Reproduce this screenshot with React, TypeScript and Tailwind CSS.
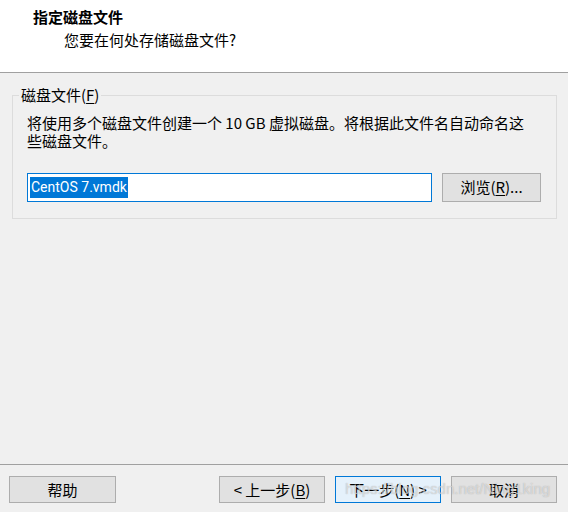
import React from 'react';

const font = { fontFamily: '"Noto Sans CJK SC", "Noto Sans", sans-serif' };

function WinButton({ children, focused = false, className = '' }: { children: React.ReactNode; focused?: boolean; className?: string }) {
  return (
    <button
      className={`h-[27px] w-[106px] border text-[15px] leading-none text-[#000] ${
        focused ? 'border-[#0078d7] bg-[#e5f1fb]' : 'border-[#adadad] bg-[#e1e1e1]'
      } ${className}`}
    >
      {children}
    </button>
  );
}

export default function App() {
  return (
    <div className="relative flex h-[512px] w-[568px] flex-col bg-[#f0f0f0] text-black" style={font}>
      {/* Header */}
      <div className="h-[73px] border-b border-[#a0a0a0] bg-white pt-[7px]">
        <div className="pl-[33px] text-[15px] font-bold leading-[20px]">指定磁盘文件</div>
        <div className="mt-[3px] pl-[64px] text-[15px] leading-[20px]">您要在何处存储磁盘文件?</div>
      </div>

      {/* Group box */}
      <fieldset className="mx-[12px] mt-[13px] border border-[#dcdcdc] pb-[16px] pl-[14px] pr-[15px]">
        <legend className="-ml-[8px] px-[2px] text-[15px] leading-[18px]">
          磁盘文件(<span className="underline underline-offset-2">F</span>)
        </legend>
        <p className="mt-[10px] whitespace-nowrap text-[15px] leading-[18px]">
          将使用多个磁盘文件创建一个 10 GB 虚拟磁盘。将根据此文件名自动命名这
          <br />
          些磁盘文件。
        </p>
        <div className="mt-[23px] flex items-center gap-[10px]">
          <div className="flex h-[29px] w-[405px] items-center border border-[#0078d7] bg-white pl-[2px]">
            <span
              className="bg-[#0078d7] px-px text-[14px] leading-[21px] text-white"
              style={{ fontFamily: 'Roboto, "Noto Sans", sans-serif' }}
            >
              CentOS 7.vmdk
            </span>
          </div>
          <button className="h-[29px] w-[99px] border border-[#adadad] bg-[#e1e1e1] text-[15px]">
            浏览(<span className="underline underline-offset-2">R</span>)...
          </button>
        </div>
      </fieldset>

      <div className="flex-1" />

      {/* Footer */}
      <div className="flex border-t border-[#a0a0a0] pb-[9px] pl-[9px] pr-[11px] pt-[11px]">
        <WinButton className="w-[107px]">帮助</WinButton>
        <div className="flex-1" />
        <div className="flex gap-[10px]">
          <WinButton>
            &lt; 上一步(<span className="underline underline-offset-2">B</span>)
          </WinButton>
          <WinButton focused>
            下一步(<span className="underline underline-offset-2">N</span>) &gt;
          </WinButton>
          <WinButton>取消</WinButton>
        </div>
      </div>

      {/* watermark */}
      <div
        className="pointer-events-none absolute left-[345px] top-[480px] whitespace-nowrap text-[15px] leading-[18px] text-white/50"
        style={{ fontFamily: '"Liberation Sans", sans-serif', textShadow: '0 0 1px rgba(120,120,120,0.6)' }}
      >
        https://blog.csdn.net/Ning1king
      </div>
    </div>
  );
}
